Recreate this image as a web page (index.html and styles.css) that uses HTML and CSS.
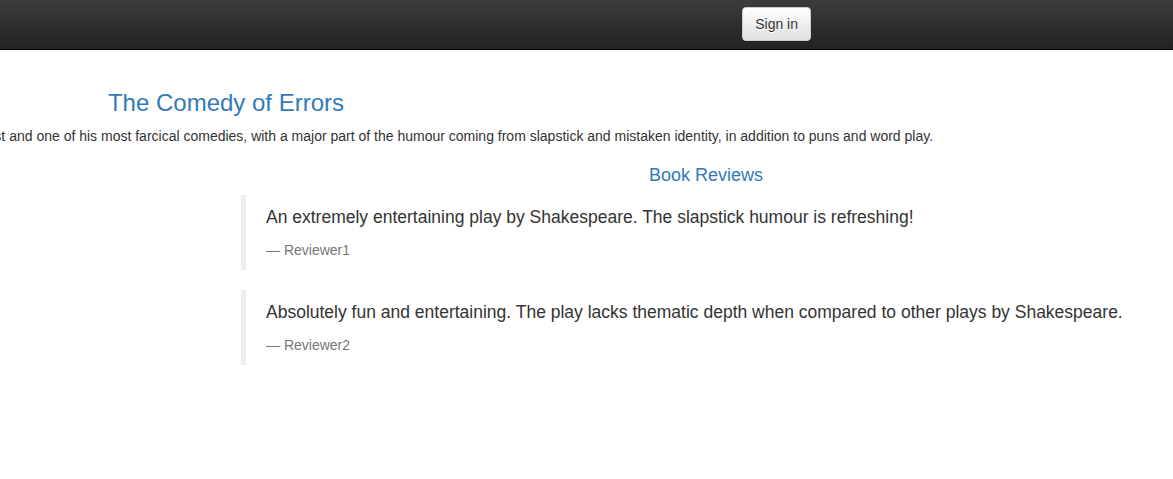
FILE: index.html
```
<!DOCTYPE html>
<html lang="en">
<head>
<meta charset="utf-8">
<title>Simple Bookstore App</title>
<link rel="stylesheet" href="styles.css">
</head>
<body>
<div class="page">
  <nav class="navbar">
    <div class="nav-container">
      <button type="button" class="btn-signin">Sign in</button>
    </div>
  </nav>
  <div class="container-fluid">
    <div class="row-full">
      <h3 class="title">The Comedy of Errors</h3>
      <p class="summary">Summary: <a class="wiki" href="#">Wikipedia Summary</a>: The Comedy of Errors is one of <b>William Shakespeare's</b> early plays. It is his shortest and one of his most farcical comedies, with a major part of the humour coming from slapstick and mistaken identity, in addition to puns and word play.</p>
    </div>
    <div class="row-split">
      <div class="col-half"></div>
      <div class="col-half">
        <h4 class="section-title">Book Reviews</h4>
        <blockquote class="review">
          <p class="review-text">An extremely entertaining play by Shakespeare. The slapstick humour is refreshing!</p>
          <small class="reviewer">Reviewer1</small>
        </blockquote>
        <blockquote class="review">
          <p class="review-text">Absolutely fun and entertaining. The play lacks thematic depth when compared to other plays by Shakespeare.</p>
          <small class="reviewer">Reviewer2</small>
        </blockquote>
      </div>
    </div>
  </div>
</div>
</body>
</html>
```
FILE: styles.css
```
html, body {
  margin: 0;
  padding: 0;
  overflow: hidden;
  background: #fff;
}
body {
  font-family: "Liberation Sans", Arial, Helvetica, sans-serif;
  font-size: 14px;
  line-height: 1.42857143;
  color: #333;
}
.page {
  width: 1920px;
  margin-left: -734px;
}
.navbar {
  height: 49px;
  border-bottom: 1px solid #080808;
  background-image: linear-gradient(to bottom, #3c3c3c 0, #222 100%);
  background-color: #222;
}
.nav-container {
  width: 1170px;
  margin: 0 auto;
  display: flex;
  justify-content: flex-end;
}
.btn-signin {
  margin-top: 7px;
  padding: 6px 12px;
  font-family: "Liberation Sans", Arial, Helvetica, sans-serif;
  font-size: 14px;
  line-height: 1.42857143;
  color: #333;
  border: 1px solid #ccc;
  border-radius: 4px;
  background-image: linear-gradient(to bottom, #fff 0, #e0e0e0 100%);
  background-color: #fff;
  text-shadow: 0 1px 0 #fff;
  box-shadow: inset 0 1px 0 rgba(255,255,255,.15), 0 1px 1px rgba(0,0,0,.075);
  cursor: pointer;
}
.container-fluid {
  padding: 20px 15px 0;
}
.title {
  margin: 20px 0 10px;
  font-size: 24px;
  font-weight: 500;
  line-height: 1.1;
  color: #337ab7;
  text-align: center;
}
.summary {
  margin: 0 0 10px;
  white-space: nowrap;
}
.wiki {
  color: #337ab7;
  text-decoration: none;
}
.row-split {
  display: flex;
  margin: 0 -15px;
}
.col-half {
  width: 50%;
  padding: 0 15px;
  box-sizing: border-box;
}
.section-title {
  margin: 10px 0 9px;
  font-size: 18px;
  font-weight: 500;
  line-height: 1.1;
  color: #337ab7;
  text-align: center;
}
.review {
  margin: 0 0 20px;
  padding: 10px 20px;
  border-left: 5px solid #eee;
  font-size: 17.5px;
}
.review-text {
  margin: 0 0 10px;
}
.reviewer {
  display: block;
  font-size: 80%;
  line-height: 1.42857143;
  color: #777;
}
.reviewer::before {
  content: "\2014 \00A0";
}
```
